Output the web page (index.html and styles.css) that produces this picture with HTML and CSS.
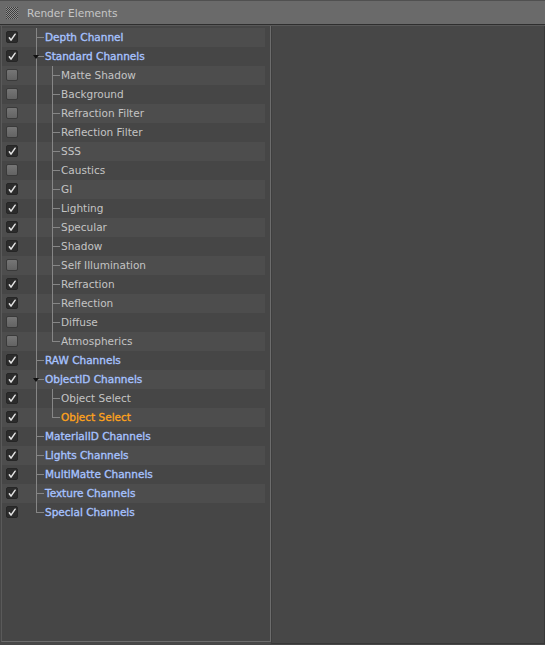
FILE: index.html
```html
<!DOCTYPE html>
<html>
<head>
<meta charset="utf-8">
<link rel="stylesheet" href="styles.css">
</head>
<body>
<div class="window">
  <div class="titlebar">
    <span class="grip"></span>
    <span class="title">Render Elements</span>
  </div>
  <div class="main">
    <div class="tree">
      <div class="row top"><span class="chk on"><svg viewBox="0 0 12 12"><path d="M2.8 6.9 L4.8 9.8 L9.8 2.6"/></svg></span><span class="g tee"></span><span class="label">Depth Channel</span></div>
      <div class="row top"><span class="chk on"><svg viewBox="0 0 12 12"><path d="M2.8 6.9 L4.8 9.8 L9.8 2.6"/></svg></span><span class="g tee"><span class="tri"></span></span><span class="label">Standard Channels</span></div>
      <div class="row child"><span class="chk"></span><span class="g pass"></span><span class="g tee"></span><span class="label">Matte Shadow</span></div>
      <div class="row child"><span class="chk"></span><span class="g pass"></span><span class="g tee"></span><span class="label">Background</span></div>
      <div class="row child"><span class="chk"></span><span class="g pass"></span><span class="g tee"></span><span class="label">Refraction Filter</span></div>
      <div class="row child"><span class="chk"></span><span class="g pass"></span><span class="g tee"></span><span class="label">Reflection Filter</span></div>
      <div class="row child"><span class="chk on"><svg viewBox="0 0 12 12"><path d="M2.8 6.9 L4.8 9.8 L9.8 2.6"/></svg></span><span class="g pass"></span><span class="g tee"></span><span class="label">SSS</span></div>
      <div class="row child"><span class="chk"></span><span class="g pass"></span><span class="g tee"></span><span class="label">Caustics</span></div>
      <div class="row child"><span class="chk on"><svg viewBox="0 0 12 12"><path d="M2.8 6.9 L4.8 9.8 L9.8 2.6"/></svg></span><span class="g pass"></span><span class="g tee"></span><span class="label">GI</span></div>
      <div class="row child"><span class="chk on"><svg viewBox="0 0 12 12"><path d="M2.8 6.9 L4.8 9.8 L9.8 2.6"/></svg></span><span class="g pass"></span><span class="g tee"></span><span class="label">Lighting</span></div>
      <div class="row child"><span class="chk on"><svg viewBox="0 0 12 12"><path d="M2.8 6.9 L4.8 9.8 L9.8 2.6"/></svg></span><span class="g pass"></span><span class="g tee"></span><span class="label">Specular</span></div>
      <div class="row child"><span class="chk on"><svg viewBox="0 0 12 12"><path d="M2.8 6.9 L4.8 9.8 L9.8 2.6"/></svg></span><span class="g pass"></span><span class="g tee"></span><span class="label">Shadow</span></div>
      <div class="row child"><span class="chk"></span><span class="g pass"></span><span class="g tee"></span><span class="label">Self Illumination</span></div>
      <div class="row child"><span class="chk on"><svg viewBox="0 0 12 12"><path d="M2.8 6.9 L4.8 9.8 L9.8 2.6"/></svg></span><span class="g pass"></span><span class="g tee"></span><span class="label">Refraction</span></div>
      <div class="row child"><span class="chk on"><svg viewBox="0 0 12 12"><path d="M2.8 6.9 L4.8 9.8 L9.8 2.6"/></svg></span><span class="g pass"></span><span class="g tee"></span><span class="label">Reflection</span></div>
      <div class="row child"><span class="chk"></span><span class="g pass"></span><span class="g tee"></span><span class="label">Diffuse</span></div>
      <div class="row child"><span class="chk"></span><span class="g pass"></span><span class="g elbow"></span><span class="label">Atmospherics</span></div>
      <div class="row top"><span class="chk on"><svg viewBox="0 0 12 12"><path d="M2.8 6.9 L4.8 9.8 L9.8 2.6"/></svg></span><span class="g tee"></span><span class="label">RAW Channels</span></div>
      <div class="row top"><span class="chk on"><svg viewBox="0 0 12 12"><path d="M2.8 6.9 L4.8 9.8 L9.8 2.6"/></svg></span><span class="g tee"><span class="tri"></span></span><span class="label">ObjectID Channels</span></div>
      <div class="row child"><span class="chk on"><svg viewBox="0 0 12 12"><path d="M2.8 6.9 L4.8 9.8 L9.8 2.6"/></svg></span><span class="g pass"></span><span class="g tee"></span><span class="label">Object Select</span></div>
      <div class="row child"><span class="chk on"><svg viewBox="0 0 12 12"><path d="M2.8 6.9 L4.8 9.8 L9.8 2.6"/></svg></span><span class="g pass"></span><span class="g elbow"></span><span class="label sel">Object Select</span></div>
      <div class="row top"><span class="chk on"><svg viewBox="0 0 12 12"><path d="M2.8 6.9 L4.8 9.8 L9.8 2.6"/></svg></span><span class="g tee"></span><span class="label">MaterialID Channels</span></div>
      <div class="row top"><span class="chk on"><svg viewBox="0 0 12 12"><path d="M2.8 6.9 L4.8 9.8 L9.8 2.6"/></svg></span><span class="g tee"></span><span class="label">Lights Channels</span></div>
      <div class="row top"><span class="chk on"><svg viewBox="0 0 12 12"><path d="M2.8 6.9 L4.8 9.8 L9.8 2.6"/></svg></span><span class="g tee"></span><span class="label">MultiMatte Channels</span></div>
      <div class="row top"><span class="chk on"><svg viewBox="0 0 12 12"><path d="M2.8 6.9 L4.8 9.8 L9.8 2.6"/></svg></span><span class="g tee"></span><span class="label">Texture Channels</span></div>
      <div class="row top"><span class="chk on"><svg viewBox="0 0 12 12"><path d="M2.8 6.9 L4.8 9.8 L9.8 2.6"/></svg></span><span class="g elbow"></span><span class="label">Special Channels</span></div>
    </div>
    <div class="side"></div>
  </div>
</div>
</body>
</html>
```
FILE: styles.css
```css
html, body {
  margin: 0;
  padding: 0;
  background: #474747;
}
.window {
  width: 545px;
  height: 645px;
  display: flex;
  flex-direction: column;
  font-family: "DejaVu Sans", "Liberation Sans", sans-serif;
  font-size: 10.5px;
  overflow: hidden;
}
.titlebar {
  height: 23px;
  background: #6a6a6a;
  border-top: 1px solid #505050;
  border-bottom: 1px solid #2e2e2e;
  display: flex;
  align-items: center;
  padding-left: 6px;
  flex: none;
}
.grip {
  width: 12px;
  height: 12px;
  background: repeating-conic-gradient(#3c3c3c 0 25%, #8e8e8e 0 50%) 0 0 / 2px 2px;
  margin-right: 9px;
}
.title {
  color: #c6c6c6;
  font-size: 10.6px;
  padding-top: 1px;
}
.main {
  flex: 1;
  display: flex;
  border-top: 1px solid #585858;
  min-height: 0;
}
.tree {
  width: 263px;
  margin-left: 1px;
  margin-bottom: 3px;
  padding: 2px 5px 0 0;
  border-left: 1px solid #5a5a5a;
  border-right: 1px solid #6c6c6c;
  border-bottom: 1px solid #6c6c6c;
  background: #464646;
  display: flex;
  flex-direction: column;
}
.side {
  flex: 1;
  background: #474747;
  border-left: 1px solid #3e3e3e;
  border-right: 1px solid #383838;
  border-bottom: 1px solid #383838;
  margin-bottom: 1px;
}
.row {
  height: 19px;
  display: flex;
  align-items: stretch;
  background: #464646;
}
.row:nth-child(odd) {
  background: #4d4d4d;
}
.chk {
  width: 12px;
  height: 12px;
  margin: 3px 10px 0 4px;
  box-sizing: border-box;
  border-radius: 2px;
  background: linear-gradient(#767676, #636363);
  border: 1px solid #3a3a3a;
  flex: none;
}
.chk.on {
  background: #2c2c2c;
  border-color: #262626;
  display: flex;
}
.chk svg {
  width: 10px;
  height: 10px;
  fill: none;
  stroke: #e4e4e4;
  stroke-width: 1.8;
  stroke-linecap: round;
  stroke-linejoin: round;
}
.g {
  width: 16px;
  flex: none;
  display: flex;
  align-items: center;
  background-repeat: no-repeat;
}
.g.tee {
  background-image: linear-gradient(#868686, #868686), linear-gradient(#868686, #868686);
  background-size: 1px 100%, 8px 1px;
  background-position: 8px 0, 8px 9px;
}
.g.elbow {
  background-image: linear-gradient(#868686, #868686), linear-gradient(#868686, #868686);
  background-size: 1px 10px, 8px 1px;
  background-position: 8px 0, 8px 9px;
}
.g.pass {
  background-image: linear-gradient(#868686, #868686);
  background-size: 1px 100%;
  background-position: 8px 0;
}
.tri {
  width: 0;
  height: 0;
  margin-left: 5px;
  margin-top: 1px;
  border-left: 3px solid transparent;
  border-right: 3px solid transparent;
  border-top: 4px solid #111;
}
.label {
  margin-left: 1px;
  line-height: 19px;
  white-space: nowrap;
}
.top .label {
  color: #a6c2ff;
  -webkit-text-stroke: 0.35px #a6c2ff;
}
.child .label {
  color: #c4c4c4;
}
.child .label.sel {
  color: #ffa31c;
  -webkit-text-stroke: 0.3px #ffa31c;
}
```
